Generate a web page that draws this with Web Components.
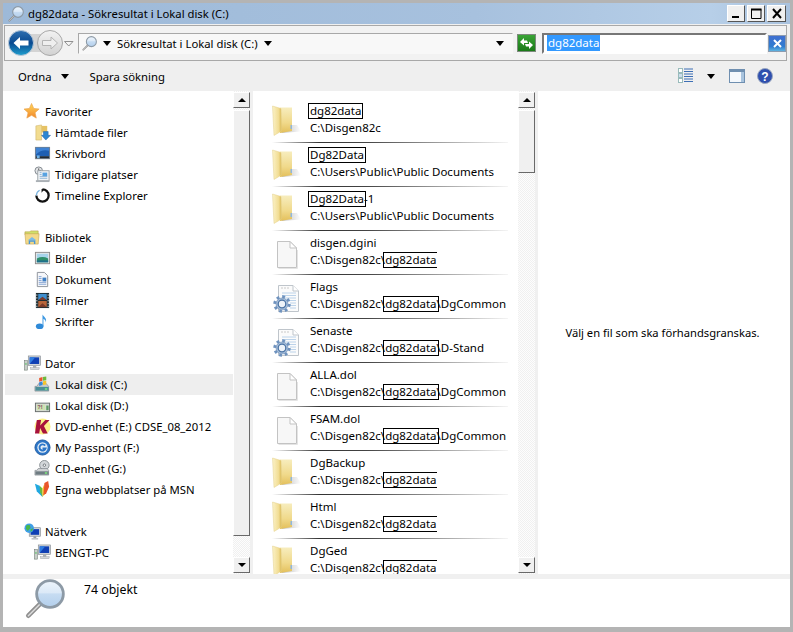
<!DOCTYPE html>
<html lang="sv">
<head>
<meta charset="utf-8">
<title>dg82data - Sökresultat i Lokal disk (C:)</title>
<style>
  html, body { margin: 0; height: 100%; overflow: hidden; background: #b4b4b4; }
  body { font: 11.3px "Noto Sans", "Liberation Sans", sans-serif; color: #000; }
</style>
</head>
<body>
<explorer-window>
  <title-bar slot="title">dg82data - Sökresultat i Lokal disk (C:)</title-bar>
  <address-bar slot="address"></address-bar>
  <command-bar slot="commands"></command-bar>
  <nav-pane slot="nav">
    <nav-item icon="star" head>Favoriter</nav-item>
    <nav-item icon="downloads">Hämtade filer</nav-item>
    <nav-item icon="desktop">Skrivbord</nav-item>
    <nav-item icon="recent">Tidigare platser</nav-item>
    <nav-item icon="timeline">Timeline Explorer</nav-item>
    <nav-item></nav-item>
    <nav-item icon="library" head>Bibliotek</nav-item>
    <nav-item icon="pictures">Bilder</nav-item>
    <nav-item icon="docs">Dokument</nav-item>
    <nav-item icon="film">Filmer</nav-item>
    <nav-item icon="music">Skrifter</nav-item>
    <nav-item></nav-item>
    <nav-item icon="computer" head>Dator</nav-item>
    <nav-item icon="windisk" selected>Lokal disk (C:)</nav-item>
    <nav-item icon="diskd">Lokal disk (D:)</nav-item>
    <nav-item icon="dvd">DVD-enhet (E:) CDSE_08_2012</nav-item>
    <nav-item icon="passport">My Passport (F:)</nav-item>
    <nav-item icon="cdrom">CD-enhet (G:)</nav-item>
    <nav-item icon="msn">Egna webbplatser på MSN</nav-item>
    <nav-item></nav-item>
    <nav-item icon="network" head>Nätverk</nav-item>
    <nav-item icon="computer">BENGT-PC</nav-item>
  </nav-pane>
  <result-list slot="list">
    <result-row icon="folder"><mark-box>dg82data</mark-box><span slot="path">C:\Disgen82c</span></result-row>
    <result-row icon="folder"><mark-box>Dg82Data</mark-box><span slot="path">C:\Users\Public\Public Documents</span></result-row>
    <result-row icon="folder"><mark-box>Dg82Data</mark-box>-1<span slot="path">C:\Users\Public\Public Documents</span></result-row>
    <result-row icon="file">disgen.dgini<span slot="path">C:\Disgen82c\<mark-box>dg82data</mark-box></span></result-row>
    <result-row icon="config">Flags<span slot="path">C:\Disgen82c\<mark-box>dg82data</mark-box>\DgCommon</span></result-row>
    <result-row icon="config">Senaste<span slot="path">C:\Disgen82c\<mark-box>dg82data</mark-box>\D-Stand</span></result-row>
    <result-row icon="file">ALLA.dol<span slot="path">C:\Disgen82c\<mark-box>dg82data</mark-box>\DgCommon</span></result-row>
    <result-row icon="file">FSAM.dol<span slot="path">C:\Disgen82c\<mark-box>dg82data</mark-box>\DgCommon</span></result-row>
    <result-row icon="folder">DgBackup<span slot="path">C:\Disgen82c\<mark-box>dg82data</mark-box></span></result-row>
    <result-row icon="folder">Html<span slot="path">C:\Disgen82c\<mark-box>dg82data</mark-box></span></result-row>
    <result-row icon="folder">DgGed<span slot="path">C:\Disgen82c\<mark-box>dg82data</mark-box></span></result-row>
  </result-list>
  <preview-pane slot="preview">Välj en fil som ska förhandsgranskas.</preview-pane>
  <status-bar slot="status">74 objekt</status-bar>
</explorer-window>

<script>
const lens = `<svg viewBox="0 0 24 24" width="100%" height="100%">
  <defs><linearGradient id="g" x1="0" y1="0" x2="0" y2="1"><stop offset="0" stop-color="#eef5fc"/><stop offset=".45" stop-color="#dbe9f7"/><stop offset=".5" stop-color="#c6dcf2"/><stop offset="1" stop-color="#b3cfec"/></linearGradient></defs>
  <path d="M9.500 14.500 2 22" stroke="#8f8f8f" stroke-width="2.800" stroke-linecap="round"/>
  <path d="M9.500 14.500 2 22" stroke="#dcdcdc" stroke-width=".9" stroke-linecap="round"/>
  <circle cx="15" cy="9" r="8" fill="url(#g)" stroke="#8d9aa6" stroke-width="1.700"/>
</svg>`;

const FOLDER = `<svg viewBox="0 0 30 32" width="30" height="32">
  <defs>
    <linearGradient id="fb" x1="0" y1="0" x2="0" y2="1"><stop offset="0" stop-color="#f7edbe"/><stop offset=".6" stop-color="#f0d98a"/><stop offset="1" stop-color="#e3bf5a"/></linearGradient>
    <linearGradient id="fd" x1="0" y1="0" x2="1" y2="0"><stop offset="0" stop-color="#fbf2c8"/><stop offset=".7" stop-color="#f1dc92"/><stop offset="1" stop-color="#d8b650"/></linearGradient>
    <linearGradient id="fs" x1="0" y1="0" x2="1" y2="0"><stop offset="0" stop-color="#9a9a9a"/><stop offset="1" stop-color="#fff"/></linearGradient>
  </defs>
  <path d="M9 28 29 26.500 25 20 20 20Z" fill="url(#fs)" opacity=".7"/>
  <path d="M8 2.500 20 2.500 20 26 8 28Z" fill="url(#fb)"/>
  <path d="M.5 1 9 3.500 9.500 26 2 30.500Z" fill="url(#fd)" stroke="#e5d08a" stroke-width=".5"/>
  <path d="M18.500 20h1.500v4h-1.500z" fill="#8fb7dc"/>
</svg>`;

const PAGE = `<path d="M2.500 1.500H15L21.500 8V27.500H2.500Z" fill="#f7f7f7" stroke="#c3c3c3"/><path d="M15 1.500V8H21.500Z" fill="#fff" stroke="#c3c3c3"/><path d="M3.500 28.500H22.500V10" fill="none" stroke="#e4e4e4"/>`;

const ICONS = {
  folder: FOLDER,
  file: `<svg viewBox="0 0 24 30" width="24" height="30" style="margin:3px 0 0 3px">${PAGE}</svg>`,
  config: `<svg viewBox="0 0 28 32" width="28" height="32">
    <path d="M6.500 4.500H21L26.500 10V30.500H6.500Z" fill="#fbfbfb" stroke="#bfc5cb"/>
    <path d="M21 4.500V10H26.500" fill="#fff" stroke="#bfc5cb"/>
    <path d="M9 7h8" stroke="#c9c9c9" stroke-dasharray="2 1"/>
    <path d="M10 12h14M10 14.500h14M10 17h14M10 19.500h14M18 22h6M18 24.500h6M18 27h6" stroke="#bcd3ea"/>
    <circle cx="10" cy="23" r="7.200" fill="none" stroke="#6f93bf" stroke-width="3" stroke-dasharray="2.800 2.850"/>
    <circle cx="10" cy="23" r="6" fill="#a8c0dc" stroke="#6787b0" stroke-width=".6"/>
    <circle cx="10" cy="23" r="3.800" fill="#eef3f9" stroke="#4c74a4" stroke-width="1.300"/>
  </svg>`,
  star: `<svg viewBox="0 0 18 18"><defs><linearGradient id="s" x1="0" y1="0" x2="0" y2="1"><stop offset="0" stop-color="#ffd95a"/><stop offset="1" stop-color="#f2852a"/></linearGradient></defs><path d="M8 .5 10.300 5.800 16 6.400 11.700 10.200 13 16 8 13 3 16 4.300 10.200 0 6.400 5.700 5.800Z" fill="url(#s)" stroke="#e9a24c" stroke-width=".7"/></svg>`,
  downloads: `<svg viewBox="0 0 18 18"><path d="M2 2 8 1 8 17 2 17Z" fill="#f2dc90" stroke="#cfb366" stroke-width=".6"/><path d="M8 2H14V9H8Z" fill="#e6c264"/><path d="M10 8h5v4h2.500L12.500 17 8 12h2Z" fill="#2c86d2" stroke="#1c5f9e" stroke-width=".5"/></svg>`,
  desktop: `<svg viewBox="0 0 18 18"><rect x="1" y="2" width="16" height="13" fill="#7d8791"/><rect x="2" y="3" width="14" height="9" fill="#1f5fb2"/><path d="M2 3H16V6Q8 4 2 10Z" fill="#3f83d4"/><rect x="2" y="12" width="14" height="2" fill="#222a33"/><rect x="3" y="11" width="3" height="3" fill="#6fb3e8"/></svg>`,
  recent: `<svg viewBox="0 0 18 18"><circle cx="5" cy="5" r="4" fill="#e4e6e8" stroke="#7f868c"/><path d="M5 2.500V5H7.500" fill="none" stroke="#555"/><rect x="4" y="5" width="12" height="11" fill="#f1f3f5" stroke="#9aa2a8"/><rect x="9" y="7" width="5" height="4" fill="#56a2e2"/><path d="M6 7h2M6 9h2M6 11h8M6 13h8" stroke="#8ab2d6"/><rect x="2" y="15" width="14" height="2" fill="#aab0b5"/></svg>`,
  timeline: `<svg viewBox="0 0 18 18"><path d="M9 2.500A6.500 6.500 0 1 1 2.500 9" fill="none" stroke="#111" stroke-width="2.400"/><path d="M2.500 9A6.500 6.500 0 0 1 6 3.400" fill="none" stroke="#7ab4e0" stroke-width="1.300"/><path d="M8 2V6L11 2.500Z" fill="#111"/></svg>`,
  library: `<svg viewBox="0 0 18 18"><path d="M1 3H6L7 2H15V6H1Z" fill="#cfe06a" stroke="#b99a45" stroke-width=".6"/><path d="M1 5H16L15 16H2Z" fill="#f3d988" stroke="#c0a050" stroke-width=".6"/><path d="M5 12H12V16H10.500V13.500H6.500V16H5Z" fill="#4a97d6"/><path d="M4 12 8.500 8.500 13 12Z" fill="#7bbbe8"/></svg>`,
  pictures: `<svg viewBox="0 0 18 18"><rect x="1.500" y="2.500" width="15" height="12" fill="#e8e8e8" stroke="#8b8b8b"/><rect x="3" y="4" width="12" height="9" fill="#a7d4ea"/><path d="M3 9Q9 6 15 9V13H3Z" fill="#2f8f6a"/><path d="M3 11H15V13H3Z" fill="#1f6f8a"/></svg>`,
  docs: `<svg viewBox="0 0 18 18"><path d="M3.500 1.500H11L14.500 5V16.500H3.500Z" fill="#f6f7fa" stroke="#8c929a"/><path d="M5 6h3M5 8h3M5 10h3M5 12h8M5 14h8" stroke="#7f9fd0"/><rect x="9" y="7" width="4" height="4" fill="#3f7fc4"/></svg>`,
  film: `<svg viewBox="0 0 18 18"><rect x="2" y="1" width="14" height="16" fill="#1c2a30"/><rect x="4.500" y="2" width="9" height="6.500" fill="#3f8fcf"/><rect x="4.500" y="9.500" width="9" height="6.500" fill="#b8663a"/><path d="M4.500 8.500 9 5 13.500 8.500ZM4.500 16 9 12 13.500 16Z" fill="#7a3a2a"/><path d="M3 2.500v1.500M3 5.500V7M3 8.500V10M3 11.500V13M3 14.500V16M15 2.500v1.500M15 5.500V7M15 8.500V10M15 11.500V13M15 14.500V16" stroke="#d9e6ea"/></svg>`,
  music: `<svg viewBox="0 0 18 18"><ellipse cx="6" cy="14" rx="4" ry="3" fill="#2f8ad8"/><path d="M9 14V1.500C10 4 14 5 12.500 10 12.500 7 10.500 6.500 10 6V14Z" fill="#3c98e2"/></svg>`,
  computer: `<svg viewBox="0 0 18 18"><rect x="0.500" y="6" width="3" height="10" fill="#c9cfca" stroke="#6f7a72" stroke-width=".6"/><rect x="1" y="9" width="2" height="1" fill="#4bbf5a"/><rect x="4.500" y="1" width="13" height="10" fill="#cfd3d8" stroke="#7c838a" stroke-width=".6"/><rect x="6" y="2.500" width="10" height="7" fill="#0f3fb4"/><path d="M6 2.500H12L6 9.500Z" fill="#2f7ce0"/><path d="M9.500 11H13V13.500H9.500Z" fill="#aab0b5"/><rect x="7" y="13.500" width="9" height="2" fill="#d4d7da" stroke="#8a8f94" stroke-width=".4"/></svg>`,
  network: `<svg viewBox="0 0 18 18"><rect x="5.500" y="5" width="12" height="9" fill="#cfd3d8" stroke="#7c838a" stroke-width=".6"/><rect x="7" y="6.500" width="9" height="6" fill="#0f3fb4"/><rect x="10" y="14" width="3" height="2" fill="#9aa0a6"/><rect x="8" y="16" width="7" height="1.500" fill="#b9bec3"/><circle cx="5.500" cy="5.500" r="5" fill="#3f9ee6"/><path d="M2.500 2.500 6 2 7 5 4 8.500 2 6ZM7 6.500 9.500 5.500 9 8 7 9.500Z" fill="#48b84a"/></svg>`,
  windisk: `<svg viewBox="0 0 18 18"><path d="M3 11 5 8H13L15.500 11V16H1V11Z" fill="#c8ccd0" stroke="#6f777e" stroke-width=".6"/><rect x="1.500" y="11.500" width="14" height="4" fill="#4b8f97"/><rect x="11.500" y="13" width="2.500" height="1.500" fill="#7df07a"/><path d="M5.500 2 9 1V5L5.500 6Z" fill="#e9552a"/><path d="M9.500 1 13 .5V4.500L9.500 5Z" fill="#6cbb3c"/><path d="M5.500 6.500 9 5.500V9.500L5.500 10.500Z" fill="#3b87d8"/><path d="M9.500 5.500 13 5V9L9.500 9.500Z" fill="#f5c42c"/></svg>`,
  diskd: `<svg viewBox="0 0 18 18"><rect x="1.500" y="6.500" width="15" height="9" fill="#d7dad8" stroke="#666c6a"/><rect x="3" y="8" width="9" height="6" fill="#cfe3b0"/><text x="3.500" y="13" font-size="6" font-weight="700" fill="#7a3a66" font-family="Liberation Sans">?!</text><rect x="13" y="9" width="2.500" height="5" fill="#5d9a63"/></svg>`,
  dvd: `<svg viewBox="0 0 18 18"><circle cx="9" cy="9" r="8.500" fill="#fbf08a"/><path d="M3 2H7.500L6.500 8 12 2H16.500L10.500 8.500 14.500 16.500H9.500L6.500 10.500 5.500 16.500H1Z" fill="#a8123c"/></svg>`,
  passport: `<svg viewBox="0 0 18 18"><circle cx="9" cy="9" r="8" fill="#2c76c8" stroke="#1f5aa0"/><circle cx="9" cy="9" r="5.500" fill="#e5eef6"/><path d="M11.800 7A3.300 3.300 0 1 0 12.300 10H9" fill="none" stroke="#2c76c8" stroke-width="2"/></svg>`,
  cdrom: `<svg viewBox="0 0 18 18"><circle cx="11" cy="5.500" r="5" fill="#d3d7da" stroke="#8a9095"/><circle cx="11" cy="5.500" r="1.300" fill="#fff" stroke="#6f757a"/><path d="M3 11 4.500 9H14L15.500 11V16H1V11Z" fill="#cfd2d4" stroke="#6f777e" stroke-width=".6"/><rect x="1.500" y="12" width="14" height="3.500" fill="#6f7c82"/><rect x="11.500" y="13" width="2.500" height="1.500" fill="#7df07a"/></svg>`,
  msn: `<svg viewBox="0 0 18 18"><path d="M1 3 6 5 8 12 9 17 3 11Z" fill="#22a8e0"/><path d="M6 5 9 8 9 17 6.500 12Z" fill="#6cbb3c"/><path d="M9 8 11 3 11 14 9 17Z" fill="#f5c42c"/><path d="M11 2 15 0 16 6 13 13 10 15Z" fill="#e9552a"/></svg>`
};

function define(name, css, html, init) {
  const tpl = document.createElement("template");
  tpl.innerHTML = `<style>${css}</style>${html}`;
  customElements.define(name, class extends HTMLElement {
    constructor() {
      super();
      this.attachShadow({ mode: "open" }).appendChild(tpl.content.cloneNode(true));
    }
    connectedCallback() {
      if (init) init(this, this.shadowRoot);
    }
  });
}

define("explorer-window", `
  :host { display: block; box-sizing: border-box; width: 793px; height: 632px; padding: 3px 3px 5px 3px; background: #b4b4b4; }
  .frame { height: 100%; display: flex; flex-direction: column; background: #f0f0f0; }
  .content { flex: 1; min-height: 0; display: flex; }
`, `<div class="frame">
    <slot name="title"></slot>
    <slot name="address"></slot>
    <slot name="commands"></slot>
    <div class="content">
      <slot name="nav"></slot>
      <slot name="list"></slot>
      <slot name="preview"></slot>
    </div>
    <slot name="status"></slot>
  </div>`);

define("title-bar", `
  :host { display: flex; align-items: center; height: 21px; padding-left: 5px; background: linear-gradient(90deg, #9db9d8, #a7c1de 60%, #b7cfe8 90%, #a9c2de); font-size: 11.3px; }
  .icon { width: 16px; height: 16px; margin-right: 4px; }
  .title { flex: 1; white-space: nowrap; }
  .btns { display: flex; gap: 2px; margin-right: 4px; align-self: flex-start; padding-top: 2px; }
  .btn { box-sizing: border-box; width: 18px; height: 17px; background: #f0f0f0; border: 1px solid; border-color: #fff #555 #555 #fff; display: flex; align-items: center; justify-content: center; }
`, `<span class="icon">${lens}</span><span class="title"><slot></slot></span>
  <span class="btns">
    <span class="btn"><svg width="14" height="13"><rect x="3" y="9" width="7" height="2"/></svg></span>
    <span class="btn"><svg width="14" height="13"><path d="M2.500 2.500H12V11.500H2.500Z" fill="none" stroke="#000"/><path d="M2 2.500H12.500" stroke="#000" stroke-width="2"/></svg></span>
    <span class="btn" style="width:19px"><svg width="14" height="13"><path d="M3 2 11 11M11 2 3 11" stroke="#000" stroke-width="2"/></svg></span>
  </span>`);

define("address-bar", `
  :host { display: flex; align-items: center; box-sizing: border-box; height: 36px; margin: 1px 3px 0 1px; padding-left: 3px; background: #f2f2f2; border: 1px solid #a8a8a8; }
  .nav { display: flex; align-items: center; }
  .crumb { flex: 1; display: flex; align-items: center; box-sizing: border-box; height: 21px; margin-left: 2px; border: 1px solid; border-color: #a8a8a8 transparent transparent #a8a8a8; background: #f8f8f8; }
  .mag { width: 15px; height: 15px; margin-left: 3px; }
  .arrow { width: 0; height: 0; border: 4px solid transparent; border-top: 5px solid #000; border-bottom: 0; }
  .refresh { width: 19px; height: 18px; margin: 0 6px 0 4px; background: linear-gradient(#3aa436, #1a7a18); border: 1px solid #7d8a7d; box-sizing: border-box; display: flex; align-items: center; justify-content: center; }
  .search { box-sizing: border-box; width: 225px; height: 21px; border: 2px solid; border-color: #777 #fff #fff #777; background: #fff; display: flex; align-items: center; padding-left: 3px; font-size: 11.5px; }
  .search span { background: #3399ff; color: #fff; padding: 0 1px; line-height: 16px; }
  .clear { box-sizing: border-box; width: 18px; height: 17px; margin-left: 1px; background: linear-gradient(#3f6fd0, #2f7cd0 70%, #5fb4e0); border: 1px solid #8b9bb0; display: flex; align-items: center; justify-content: center; }
`, `<span class="nav">
    <svg width="68" height="28" viewBox="0 0 68 28">
      <defs>
        <linearGradient id="b" x1="0" y1="0" x2="0" y2="1"><stop offset="0" stop-color="#2f6fb0"/><stop offset=".5" stop-color="#0a4a90"/><stop offset="1" stop-color="#1f9fcf"/></linearGradient>
        <linearGradient id="f" x1="0" y1="0" x2="0" y2="1"><stop offset="0" stop-color="#f2f2f2"/><stop offset="1" stop-color="#d2d2d2"/></linearGradient>
      </defs>
      <path d="M14 5H42V23H14Z" fill="#d4d4d4"/>
      <circle cx="13" cy="14" r="12.500" fill="url(#b)" stroke="#b8c8d8"/>
      <path d="M5.500 14 12 8V11.500H20.500V16.500H12V20Z" fill="#fff"/>
      <circle cx="42" cy="14" r="12.500" fill="url(#f)" stroke="#a8a8a8"/>
      <path d="M49.500 14 43 8V11.500H34.500V16.500H43V20Z" fill="#efefef" stroke="#b4b4b4"/>
      <path d="M56.500 12.500H65L60.750 17Z" fill="#f4f4f4" stroke="#909090"/>
    </svg>
  </span>
  <span class="crumb">
    <span class="mag">${lens}</span>
    <span class="arrow" style="margin:0 6px"></span>
    <span>Sökresultat i Lokal disk (C:)</span>
    <span class="arrow" style="margin-left:6px"></span>
    <span style="flex:1"></span>
    <span class="arrow" style="margin-right:8px"></span>
  </span>
  <span class="refresh"><svg width="15" height="13"><path d="M1 5 5 1V3.500H8L9 6H5V8.500ZM14 8 10 12V9.500H7L6 7H10V4.500Z" fill="#fff"/></svg></span>
  <span class="search"><span>dg82data</span></span>
  <span class="clear"><svg width="11" height="11"><path d="M2 2 9 9M9 2 2 9" stroke="#fff" stroke-width="2"/></svg></span>`);

define("command-bar", `
  :host { display: flex; align-items: center; height: 30px; padding: 0 17px 0 15px; background: #efefef; }
  .arrow { width: 0; height: 0; border: 4px solid transparent; border-top: 5px solid #000; border-bottom: 0; }
  .ordna { display: inline-flex; align-items: center; gap: 9px; margin-right: 21px; }
  .sp { flex: 1; }
  .tools { display: flex; align-items: center; }
`, `<span class="ordna">Ordna <span class="arrow"></span></span><span>Spara sökning</span><span class="sp"></span>
  <span class="tools">
    <svg width="15" height="16"><rect x=".5" y=".5" width="4" height="4" fill="#fff" stroke="#9bb"/><rect x=".5" y="5.500" width="4" height="4" fill="#cde" stroke="#9bb"/><rect x=".5" y="10.500" width="4" height="4" fill="#fff" stroke="#9bb"/><path d="M6 1h9M6 3.500h9M6 6h9M6 8.500h9M6 11h9M6 13.500h9" stroke="#3d6fb5"/></svg>
    <span class="arrow" style="margin:0 14px"></span>
    <svg width="16" height="14" style="margin-right:12px"><rect x=".5" y=".5" width="15" height="13" fill="#f4f8fc" stroke="#6f8fb0"/><rect x="1" y="1" width="14" height="2" fill="#6f8fb0"/><rect x="12" y="3" width="3" height="10" fill="#a9c4de"/></svg>
    <svg width="16" height="16"><circle cx="8" cy="8" r="7.500" fill="#2f4fae" stroke="#9aa8c0"/><text x="8" y="12.500" font-size="12" font-weight="700" fill="#fff" text-anchor="middle" font-family="Liberation Sans">?</text></svg>
  </span>`);

define("win-scrollbar", `
  :host { display: flex; flex-direction: column; flex: none; box-sizing: border-box; width: 17px; height: 100%; padding: 1px 0; background: repeating-conic-gradient(#f0f0f0 0 25%, #fdfdfd 0 50%) 0 0 / 2px 2px; }
  .btn { box-sizing: border-box; height: 16px; width: 17px; background: #f0f0f0; border: 1px solid; border-color: #fff #696969 #696969 #fff; display: flex; align-items: center; justify-content: center; flex: none; }
  .thumb { box-sizing: border-box; width: 17px; margin-top: 2px; background: #f0f0f0; border: 1px solid; border-color: #fff #696969 #696969 #fff; flex: none; }
  .up { width: 0; height: 0; border: 4px solid transparent; border-bottom: 4px solid #000; border-top: 0; }
  .dn { width: 0; height: 0; border: 4px solid transparent; border-top: 4px solid #000; border-bottom: 0; }
  .sp { flex: 1; }
`, `<span class="btn"><span class="up"></span></span><span class="thumb"></span><span class="sp"></span><span class="btn"><span class="dn"></span></span>`,
(el, root) => { root.querySelector(".thumb").style.height = el.getAttribute("thumb") + "px"; });

define("nav-pane", `
  :host { display: flex; flex: none; width: 247px; height: 100%; background: #fff; }
  .items { flex: 1; padding: 10px 0 0 2px; min-width: 0; overflow: hidden; }
`, `<div class="items"><slot></slot></div><win-scrollbar thumb="426"></win-scrollbar>`);

define("nav-item", `
  :host { display: flex; align-items: center; height: 21px; padding-left: 29px; white-space: nowrap; }
  :host([head]) { padding-left: 3px; }
  :host([selected]) { background: #eeeeee; }
  .ic { width: 17px; height: 17px; margin-right: 4px; flex: none; }
  :host([head]) .ic { margin-left: 16px; }
  :host(:not([icon])) .ic { visibility: hidden; }
`, `<span class="ic"></span><slot></slot>`,
(el, root) => {
  const name = el.getAttribute("icon");
  if (name) root.querySelector(".ic").innerHTML = ICONS[name];
});

define("result-list", `
  :host { display: flex; flex: none; width: 282px; height: 100%; margin-left: 3px; background: #fff; }
  .items { flex: 1; min-width: 0; padding-top: 8px; overflow: hidden; }
`, `<div class="items"><slot></slot></div><win-scrollbar thumb="63"></win-scrollbar>`);

define("result-row", `
  :host { display: block; height: 44px; margin-left: 19px; width: 236px; white-space: nowrap; font-size: 11.5px; }
  .row { display: flex; height: 43px; }
  .ic { width: 28px; flex: none; margin-right: 8px; padding-top: 6px; height: 32px; }
  .txt { min-width: 0; padding: 3px 0 0 2px; overflow: hidden; }
  .line { height: 17px; line-height: 17px; }
  .rule { height: 1px; background: linear-gradient(90deg, #fff, #333 20%, #444 40%, #aaa 75%, #f4f4f4); }
`, `<div class="row"><span class="ic"></span><div class="txt"><div class="line"><slot></slot></div><div class="line"><slot name="path"></slot></div></div></div><div class="rule"></div>`,
(el, root) => { root.querySelector(".ic").innerHTML = ICONS[el.getAttribute("icon")]; });

define("mark-box", `
  :host { display: inline-block; box-sizing: border-box; outline: 1px solid #000; outline-offset: -1px; padding: 0 2px; margin: 0 -2px; line-height: 15px; height: 16px; }
`, `<slot></slot>`);

define("preview-pane", `
  :host { flex: 1; min-width: 0; height: 100%; margin-left: 3px; padding-right: 3px; box-sizing: border-box; background: #fff; display: flex; align-items: center; justify-content: center; font-size: 11.2px; }
`, `<span><slot></slot></span>`);

define("status-bar", `
  :host { display: flex; flex: none; height: 48px; margin-top: 5px; background: #fff; font-size: 12.3px; }
  .ic { width: 40px; height: 40px; margin-left: 22px; }
  .txt { margin: 2px 0 0 19px; }
`, `<span class="ic">${lens}</span><span class="txt"><slot></slot></span>`);
</script>
</body>
</html>
